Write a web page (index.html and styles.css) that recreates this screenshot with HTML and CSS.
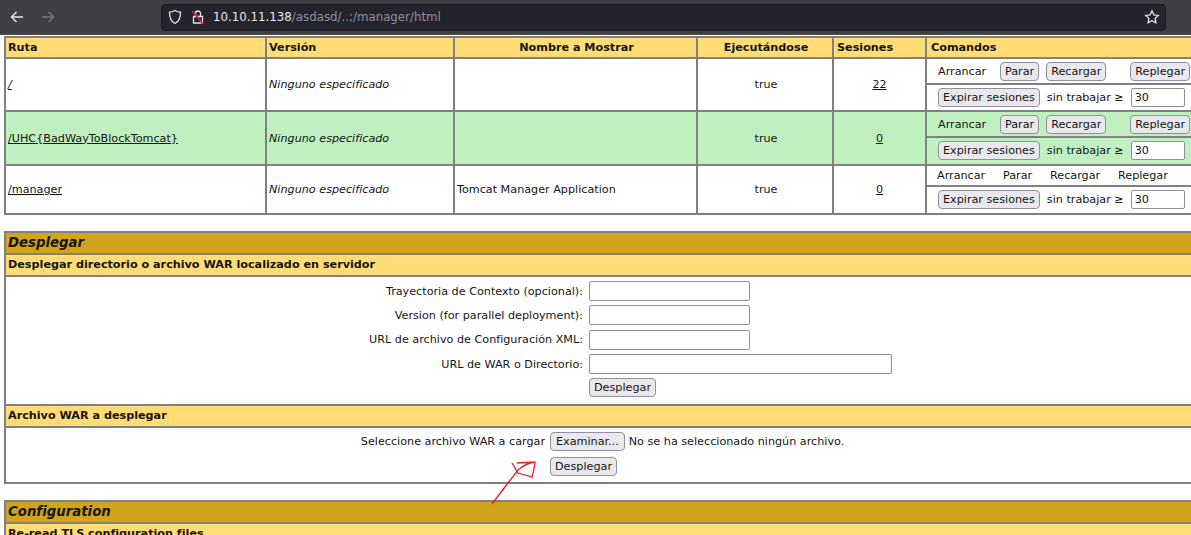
FILE: index.html
```html
<!DOCTYPE html>
<html lang="es">
<head>
    <meta charset="UTF-8">
    <title>/manager</title>
    <link rel="stylesheet" href="styles.css">
</head>
<body>
    <div class="toolbar">
        <svg class="nav-icon" width="16" height="16" viewBox="0 0 16 16"><path d="M14 8H3M7.500 3L2.500 8l5 5" fill="none" stroke="#e4e4e8" stroke-width="1.500"/></svg>
        <svg class="nav-icon dim" width="16" height="16" viewBox="0 0 16 16"><path d="M2 8h11M8.500 3l5 5-5 5" fill="none" stroke="#77767d" stroke-width="1.500"/></svg>
        <div class="urlbar">
            <svg width="16" height="16" viewBox="0 0 16 16"><path d="M8 1.500c2 1.200 3.600 1.600 5.500 1.700 0 5-1 9.300-5.500 11.300C3.500 12.500 2.500 8.200 2.500 3.200 4.400 3.100 6 2.700 8 1.500z" fill="none" stroke="#e4e4e8" stroke-width="1.300"/></svg>
            <svg class="lock" width="16" height="16" viewBox="0 0 16 16"><path d="M5.500 7V4.500a2.500 2.500 0 0 1 5 0V7M3.500 7.500h9v6.500h-9z" fill="none" stroke="#e4e4e8" stroke-width="1.300"/><path d="M2.500 2L13 15" stroke="#e5203a" stroke-width="1.600"/></svg>
            <span class="url"><b>10.10.11.138</b>/asdasd/..;/manager/html</span>
            <svg class="star" width="16" height="16" viewBox="0 0 16 16"><path d="M8 1.800l1.900 4 4.400.6-3.200 3 .8 4.400L8 11.700l-3.900 2.100.8-4.400-3.200-3 4.400-.6z" fill="none" stroke="#e4e4e8" stroke-width="1.300"/></svg>
        </div>
    </div>

    <div class="page">
        <table class="apps">
            <colgroup>
                <col class="c-ruta"><col class="c-version"><col class="c-nombre"><col class="c-ejec"><col class="c-ses"><col>
            </colgroup>
            <thead>
                <tr>
                    <th class="left">Ruta</th>
                    <th class="left">Versión</th>
                    <th class="nudge">Nombre a Mostrar</th>
                    <th class="nudge">Ejecutándose</th>
                    <th class="left nudge-s">Sesiones</th>
                    <th class="left nudge-c">Comandos</th>
                </tr>
            </thead>
            <tbody>
                <tr class="row-a">
                    <td><a href="#">/</a></td>
                    <td><i>Ninguno especificado</i></td>
                    <td></td>
                    <td class="center nudge">true</td>
                    <td class="center"><a href="#" class="plain">22</a></td>
                    <td class="cmds">
                        <div class="cmd-row top">
                            <span class="w-arrancar">Arrancar</span>
                            <button>Parar</button>
                            <button>Recargar</button>
                            <button class="push">Replegar</button>
                        </div>
                        <div class="cmd-row">
                            <button>Expirar sesiones</button>
                            <span class="idle">sin trabajar ≥</span>
                            <input class="num" type="text" value="30">
                        </div>
                    </td>
                </tr>
                <tr class="row-b">
                    <td><a href="#">/UHC{BadWayToBlockTomcat}</a></td>
                    <td><i>Ninguno especificado</i></td>
                    <td></td>
                    <td class="center nudge">true</td>
                    <td class="center"><a href="#" class="plain">0</a></td>
                    <td class="cmds">
                        <div class="cmd-row top">
                            <span class="w-arrancar">Arrancar</span>
                            <button>Parar</button>
                            <button>Recargar</button>
                            <button class="push">Replegar</button>
                        </div>
                        <div class="cmd-row">
                            <button>Expirar sesiones</button>
                            <span class="idle">sin trabajar ≥</span>
                            <input class="num" type="text" value="30">
                        </div>
                    </td>
                </tr>
                <tr class="row-c">
                    <td><a href="#">/manager</a></td>
                    <td><i>Ninguno especificado</i></td>
                    <td>Tomcat Manager Application</td>
                    <td class="center nudge">true</td>
                    <td class="center"><a href="#" class="plain">0</a></td>
                    <td class="cmds">
                        <div class="cmd-row top text-only">
                            <span>Arrancar</span>
                            <span>Parar</span>
                            <span>Recargar</span>
                            <span>Replegar</span>
                        </div>
                        <div class="cmd-row">
                            <button>Expirar sesiones</button>
                            <span class="idle">sin trabajar ≥</span>
                            <input class="num" type="text" value="30">
                        </div>
                    </td>
                </tr>
            </tbody>
        </table>

        <section class="panel deploy">
            <div class="title">Desplegar</div>
            <div class="subtitle">Desplegar directorio o archivo WAR localizado en servidor</div>
            <form class="server-form">
                <label>Trayectoria de Contexto (opcional):</label>
                <input type="text">
                <label>Version (for parallel deployment):</label>
                <input type="text">
                <label>URL de archivo de Configuración XML:</label>
                <input class="third" type="text">
                <label>URL de WAR o Directorio:</label>
                <input class="wide" type="text">
                <span></span>
                <div><button type="button">Desplegar</button></div>
            </form>
            <div class="subtitle">Archivo WAR a desplegar</div>
            <form class="upload-form">
                <label>Seleccione archivo WAR a cargar</label>
                <div class="file-line"><button type="button">Examinar...</button><span>No se ha seleccionado ningún archivo.</span></div>
                <span></span>
                <div><button type="button">Desplegar</button></div>
            </form>
        </section>

        <section class="panel">
            <div class="title">Configuration</div>
            <div class="subtitle">Re-read TLS configuration files</div>
        </section>
    </div>

    <svg class="scribble" width="60" height="60" viewBox="0 0 60 60">
        <path d="M2 45L18 24L28 11Q36 4 45 3Q44 12 42 18L28 14L22 4M27 4L45 3" fill="none" stroke="#ee1c25" stroke-width="1.300"/>
    </svg>
</body>
</html>
```

FILE: styles.css
```css
* {
    box-sizing: border-box;
}
html, body {
    height: 535px;
    overflow: hidden;
}
body {
    margin: 0;
    background: white;
    color: #151515;
    font-family: "DejaVu Sans", sans-serif;
    font-size: 11.2px;
    position: relative;
}
.toolbar {
    height: 35px;
    background: #3e3f45;
    border-bottom: 1px solid #55523f;
    display: flex;
    align-items: center;
    padding-left: 9px;
}
.nav-icon {
    margin-right: 15px;
}
.nav-icon.dim {
    margin-right: 105px;
}
.urlbar {
    width: 1005px;
    height: 27px;
    background: #23242c;
    border: 1px solid #1a1a20;
    border-radius: 4px;
    display: flex;
    align-items: center;
    padding: 0 5px;
    color: #8f8f9d;
}
.lock {
    margin-left: 7px;
}
.url {
    margin-left: 7px;
    font-size: 11.8px;
}
.url b {
    color: #e8e8ec;
    font-weight: normal;
}
.star {
    margin-left: auto;
}
.page {
    padding: 1px 0 0 4px;
    width: 1200px;
}
.apps {
    border-collapse: collapse;
    table-layout: fixed;
    width: 1195px;
}
.c-ruta { width: 261px; }
.c-version { width: 188px; }
.c-nombre { width: 243px; }
.c-ejec { width: 136px; }
.c-ses { width: 93px; }
.apps th, .apps td {
    border: 2px solid #808080;
    padding: 0 2px;
}
.apps th {
    height: 21px;
    background: #ffdc75;
    font-weight: bold;
    text-align: center;
}
.apps th.left {
    text-align: left;
}
.apps td.center {
    text-align: center;
}
.apps .nudge {
    padding-left: 4px;
}
.apps .nudge-s {
    padding-left: 3px;
}
.apps .nudge-c {
    padding-left: 4px;
}
.row-a td { height: 53px; }
.row-b td { height: 54px; background: #c0f0c0; }
.row-c td { height: 49px; }
a {
    color: #151515;
}
.row-a td:first-child a {
    font-style: italic;
}
.apps td.cmds {
    padding: 0;
    vertical-align: top;
}
.cmd-row {
    display: flex;
    align-items: center;
    height: 25px;
    padding-left: 11px;
}
.cmd-row.top {
    height: 26px;
    border-bottom: 2px solid #808080;
}
.w-arrancar {
    width: 62px;
}
.cmd-row.top button {
    margin-right: 7px;
}
.cmd-row.top .push {
    margin-left: 17px;
    margin-right: 0;
}
.row-c .cmd-row.top {
    height: 21px;
    padding-left: 10px;
    padding-bottom: 1px;
}
.text-only span:nth-child(1) { width: 66px; }
.text-only span:nth-child(2) { width: 47px; }
.text-only span:nth-child(3) { width: 68px; }
button {
    height: 19px;
    padding: 0 4px;
    background: #e9e9ed;
    border: 1px solid #8f8f9d;
    border-radius: 4px;
    color: #151515;
    font-family: inherit;
    font-size: 11.2px;
}
input {
    height: 20px;
    width: 161px;
    padding: 1px 3px;
    background: white;
    border: 1px solid #8f8f9d;
    border-radius: 2px;
    color: #151515;
    font-family: inherit;
    font-size: 11.2px;
}
input.num {
    width: 54px;
    height: 19px;
    margin-left: 7px;
}
input.wide {
    width: 303px;
}
.idle {
    margin-left: 7px;
}
.panel {
    border: 2px solid #808080;
    width: 1195px;
}
.deploy {
    margin-top: 16px;
}
.panel + .panel {
    margin-top: 16px;
}
.title {
    height: 22px;
    padding: 0 2px;
    background: #d2a41c;
    border-bottom: 2px solid #808080;
    font-size: 13.3px;
    font-weight: bold;
    font-style: italic;
    line-height: 20px;
}
.subtitle {
    height: 22px;
    padding: 0 2px;
    background: #ffdc75;
    border-bottom: 2px solid #808080;
    font-weight: bold;
    line-height: 19px;
}
.server-form {
    display: grid;
    grid-template-columns: 577px auto;
    justify-content: start;
    align-items: center;
    column-gap: 6px;
    row-gap: 4px;
    padding: 4px 0 7px;
    border-bottom: 2px solid #808080;
}
.server-form label, .upload-form label {
    text-align: right;
}
.server-form input {
    display: block;
}
.server-form .third {
    margin-top: 1px;
}
.upload-form {
    display: grid;
    grid-template-columns: 539px auto;
    column-gap: 5px;
    row-gap: 6px;
    align-items: center;
    padding: 4px 0 6px;
}
.file-line button {
    padding: 0 5px;
}
.file-line span {
    margin-left: 4px;
}
.scribble {
    position: absolute;
    left: 490px;
    top: 459px;
}
```
